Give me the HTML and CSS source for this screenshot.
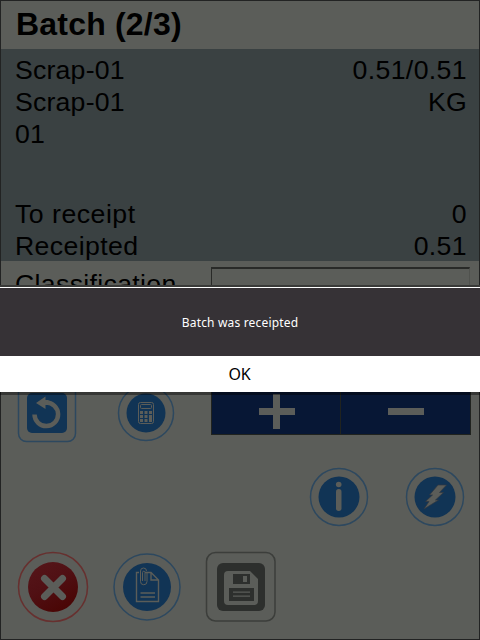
FILE: index.html
```html
<!DOCTYPE html>
<html lang="en">
<head>
<meta charset="utf-8">
<title>Batch</title>
<link rel="stylesheet" href="styles.css">
</head>
<body>
<main class="screen">
  <h1 class="title">Batch (2/3)</h1>
  <section class="info">
    <div class="row"><span>Scrap-01</span><span class="amount">0.51/0.51</span></div>
    <div class="row"><span>Scrap-01</span><span>KG</span></div>
    <div class="row"><span>01</span></div>
    <div class="row totals"><span class="wide">To receipt</span><span class="amount">0</span></div>
    <div class="row"><span class="amount">Receipted</span><span class="amount">0.51</span></div>
  </section>
  <section class="form">
    <span class="label">Classification</span>
    <div class="field"></div>
  </section>
  <section class="entry">
    <svg width="60" height="60" viewBox="0 0 60 60">
      <rect class="ring" x="1.5" y="1.5" width="57" height="57" rx="8"/>
      <rect class="blue" x="10" y="10" width="40" height="40" rx="5"/>
      <path class="undo-arc" d="M17.5 31.5A11.8 11.8 0 1 0 29 19.5"/>
      <path class="light" d="M19 20l9.500-6.500v3.500h3v5h-3v4z"/>
    </svg>
    <svg class="calc" width="60" height="60" viewBox="0 0 60 60">
      <circle class="ring" cx="30" cy="30" r="27.500"/>
      <circle class="blue" cx="30" cy="30" r="19.500"/>
      <rect class="line" x="22.500" y="19.500" width="15" height="21" rx="2"/>
      <rect class="line" x="24.500" y="21.500" width="11" height="4" rx="1"/>
      <path class="light" d="M24 28h3v3h-3zM28.500 28h3v3h-3zM33 28h3v3h-3zM24 32h3v3h-3zM28.500 32h3v3h-3zM24 36h3v3h-3zM28.500 36h3v3h-3zM33 32h3v7h-3z"/>
    </svg>
    <div class="stepper">
      <div class="step"><svg width="36" height="36" viewBox="0 0 36 36"><path class="light" d="M14 0h7v14h15v7H21v14h-7V21H0v-7h14z"/></svg></div>
      <div class="step"><svg width="36" height="36" viewBox="0 0 36 36"><path class="light" d="M0 14h36v7H0z"/></svg></div>
    </div>
  </section>
  <section class="tools">
    <svg width="60" height="60" viewBox="0 0 60 60">
      <circle class="ring" cx="30" cy="30" r="28.500"/>
      <circle class="blue" cx="30" cy="30" r="20.500"/>
      <circle class="light" cx="29.700" cy="17.500" r="2.800"/>
      <rect class="light" x="27" y="22" width="5.500" height="22" rx="2.700"/>
    </svg>
    <svg width="60" height="60" viewBox="0 0 60 60">
      <circle class="ring" cx="30" cy="30" r="28.500"/>
      <circle class="blue" cx="30" cy="30" r="20.500"/>
      <path class="bolt" d="M33 18h8.500l-7 7.500h4l-8 7.500h3L19 42l5-7.500h-3.500l7-6.500h-3z"/>
    </svg>
  </section>
  <section class="actions">
    <svg width="72" height="72" viewBox="0 0 72 72">
      <defs><linearGradient id="red" x1="0" y1="0" x2=".6" y2="1"><stop offset="0" stop-color="#56161a"/><stop offset=".5" stop-color="#501014"/><stop offset="1" stop-color="#4a0605"/></linearGradient></defs>
      <circle class="ring danger" cx="36" cy="36" r="34.500"/>
      <circle fill="url(#red)" cx="36" cy="36" r="25"/>
      <path class="cross" d="M27.500 27.500l18 18M45.500 27.500l-18 18"/>
    </svg>
    <svg class="doc" width="70" height="70" viewBox="0 0 70 70">
      <circle class="ring" cx="35" cy="35" r="33"/>
      <circle class="blue" cx="35" cy="35" r="24"/>
      <path class="line thick" d="M27 20.500h-2.500v29h22V28l-7.500-7.500h-6M39 20.500V28h7.500"/>
      <path class="line thick" d="M28.500 41h14.500M28.500 45h14.500"/>
      <path class="line" d="M35 21v8.500a3.200 3.200 0 0 1-6.500 0V19a3 3 0 0 1 6 0M30.500 29v-8.500a1.200 1.200 0 0 1 2.500 0V29"/>
    </svg>
    <svg class="save" width="72" height="72" viewBox="0 0 72 72">
      <rect class="ring muted" x="1.500" y="1.500" width="68.500" height="68.500" rx="9"/>
      <rect class="dark" x="12" y="12" width="48" height="48" rx="6"/>
      <path class="light" d="M23 20h22l8 8v22a4 4 0 0 1-4 4H23a4 4 0 0 1-4-4V24a4 4 0 0 1 4-4z"/>
      <path class="dark" d="M28 23h17v10H28zM24 37h25v13H24z"/>
      <path class="light" d="M38 25h4v6h-4zM28 40.500h17v1.200H28zM28 44.500h17v1.200H28z"/>
    </svg>
  </section>
</main>
<div class="dialog">
  <div class="message"><p>Batch was receipted</p></div>
  <button class="ok">OK</button>
</div>
</body>
</html>
```

FILE: styles.css
```css
* { box-sizing: border-box; }
body { margin: 0; width: 480px; height: 640px; overflow: hidden; position: relative; background: #242524; font-family: "Liberation Sans", sans-serif; color: #000; }
svg { display: block; flex: none; }
.screen { width: 480px; height: 640px; border: 1px solid #222323; background: #5b5d59; display: flex; flex-direction: column; }
.title { margin: 0; height: 48px; padding-left: 15px; font-size: 32px; line-height: 46px; letter-spacing: .2px; flex: none; }
.info { height: 212px; flex: none; padding: 5px 12px 0 14px; background: #3a4142; font-size: 26.67px; line-height: 32px; }
.row { display: flex; justify-content: space-between; height: 32px; letter-spacing: .2px; }
.amount { letter-spacing: .37px; }
.wide { letter-spacing: .5px; }
.totals { margin-top: 48px; }
.form { height: 122px; flex: none; display: flex; padding: 6px 9px 0 14px; font-size: 26.67px; line-height: 34px; letter-spacing: .33px; }
.label { width: 196px; }
.field { flex: 1; height: 40px; border: 1px solid #50524e; border-top: 2px solid #292a28; border-left: 1px solid #292a28; }
.entry { height: 82px; flex: none; display: flex; padding-left: 16px; }
.calc { margin: 0 0 0 38.500px; }
.stepper { margin-left: 35.500px; width: 260px; height: 52px; display: grid; grid-template-columns: 128px 130px; background: #071735; border: 1px solid #20231f; }
.step { padding: 10px 0 0 47px; }
.step + .step { border-left: 1px solid #20231f; }
.tools { height: 61px; flex: none; display: flex; justify-content: flex-end; gap: 36px; padding: 2px 14px 0 0; }
.actions { display: flex; padding: 25px 0 0 16px; align-items: flex-start; }
.doc { margin: 1px 0 0 23px; }
.save { margin: 0 0 0 22.500px; }
.ring { fill: none; stroke: #2d485f; stroke-width: 1.500; }
.danger { stroke: #67302f; }
.muted { stroke: #3c3e3b; }
.blue { fill: #113455; }
.light { fill: #5b5d59; }
.dark { fill: #2d2f2d; }
.line { fill: none; stroke: #5b5d59; stroke-width: 1; }
.thick { stroke-width: 1.400; }
.undo-arc { fill: none; stroke: #5b5d59; stroke-width: 4.500; }
.bolt { fill: #5b5d59; stroke: #303840; stroke-width: .7; }
.cross { fill: none; stroke: #5b5d59; stroke-width: 7; stroke-linecap: round; }
.dialog { position: absolute; left: 0; top: 285px; width: 480px; border-top: 2px solid #393a38; border-bottom: 3px solid rgba(0, 0, 0, .4); background-clip: padding-box; }
.message { height: 69px; padding-top: 2px; border-top: 1px solid #fff; background: #363236; color: #fff; display: flex; align-items: center; justify-content: center; }
.message p { margin: 0; font: 12px/16px "Noto Sans", sans-serif; letter-spacing: .17px; white-space: nowrap; }
.ok { display: block; width: 100%; height: 36px; border: 0; padding: 0 1px 0 0; background: #fff; color: #000; font: 16px/36px "Noto Sans", sans-serif; letter-spacing: -.3px; }
```
